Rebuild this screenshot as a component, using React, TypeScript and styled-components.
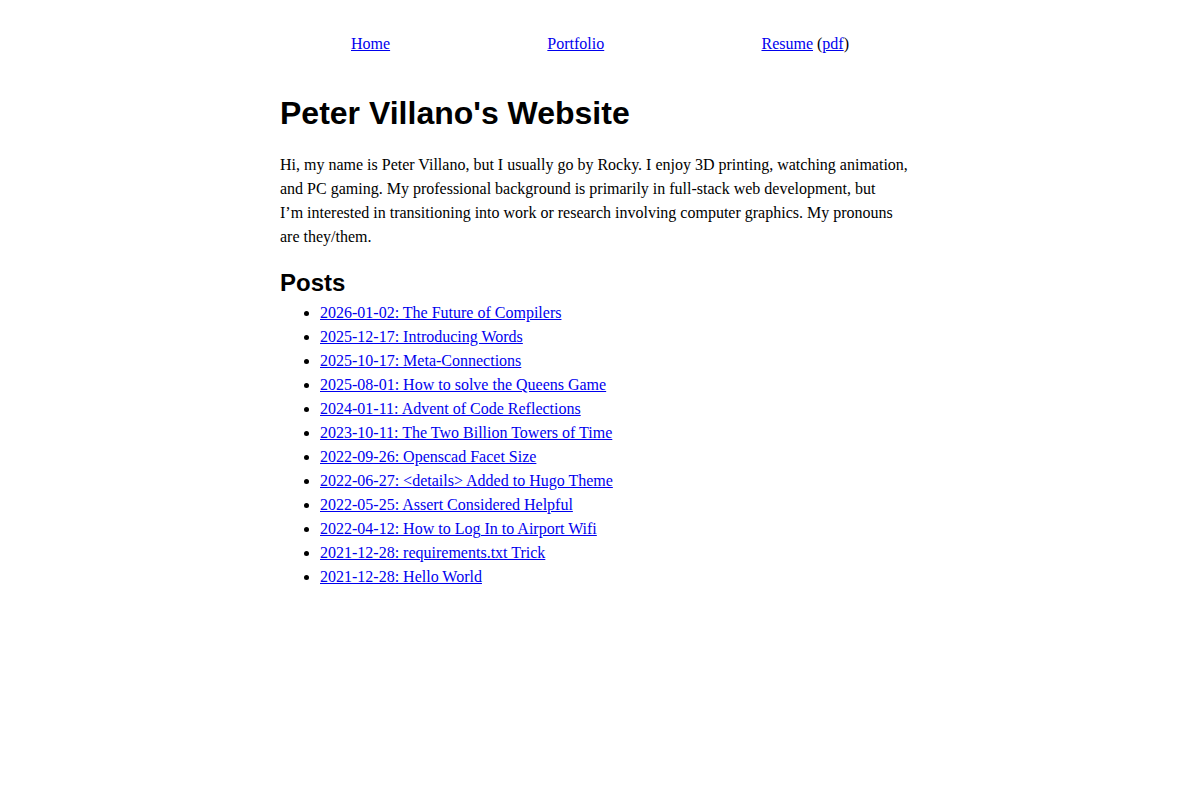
import React from 'react';
import styled, { createGlobalStyle } from 'styled-components';

const GlobalStyle = createGlobalStyle`
  html, body {
    margin: 0;
    padding: 0;
    background: #ffffff;
  }
  body {
    font-family: 'Liberation Serif', 'Times New Roman', serif;
    font-size: 16px;
    line-height: 24px;
    color: #000000;
  }
  a {
    color: #0000ee;
  }
`;

const Page = styled.div`
  max-width: 640px;
  margin: 0 auto;
  padding-top: 32px;
`;

const Nav = styled.nav`
  display: flex;
  justify-content: space-between;
  padding: 0 71px 16px;
`;

const Title = styled.h1`
  font-family: 'Liberation Sans', Arial, sans-serif;
  font-size: 32px;
  line-height: 36.8px;
  font-weight: bold;
  margin: 22.5px 0 21.44px;
`;

const Intro = styled.p`
  max-width: 632px;
  margin: 0 0 20px;
`;

const SectionHeading = styled.h2`
  font-family: 'Liberation Sans', Arial, sans-serif;
  font-size: 24px;
  line-height: 27.6px;
  font-weight: bold;
  margin: 0 0 5px;
`;

const PostList = styled.ul`
  margin: 0;
  padding-left: 40px;
`;

const posts = [
  '2026-01-02: The Future of Compilers',
  '2025-12-17: Introducing Words',
  '2025-10-17: Meta-Connections',
  '2025-08-01: How to solve the Queens Game',
  '2024-01-11: Advent of Code Reflections',
  '2023-10-11: The Two Billion Towers of Time',
  '2022-09-26: Openscad Facet Size',
  '2022-06-27: <details> Added to Hugo Theme',
  '2022-05-25: Assert Considered Helpful',
  '2022-04-12: How to Log In to Airport Wifi',
  '2021-12-28: requirements.txt Trick',
  '2021-12-28: Hello World',
];

const App = () => {
  return (
    <>
      <GlobalStyle />
      <Page>
        <Nav>
          <a href="#">Home</a>
          <a href="#">Portfolio</a>
          <span>
            <a href="#">Resume</a> (<a href="#">pdf</a>)
          </span>
        </Nav>
        <Title>Peter Villano's Website</Title>
        <Intro>
          Hi, my name is Peter Villano, but I usually go by Rocky. I enjoy 3D printing, watching
          animation, and PC gaming. My professional background is primarily in full-stack web
          development, but
          <br />
          I’m interested in transitioning into work or research involving computer graphics. My
          pronouns are they/them.
        </Intro>
        <SectionHeading>Posts</SectionHeading>
        <PostList>
          {posts.map((post) => (
            <li key={post}>
              <a href="#">{post}</a>
            </li>
          ))}
        </PostList>
      </Page>
    </>
  );
};

export default App;
